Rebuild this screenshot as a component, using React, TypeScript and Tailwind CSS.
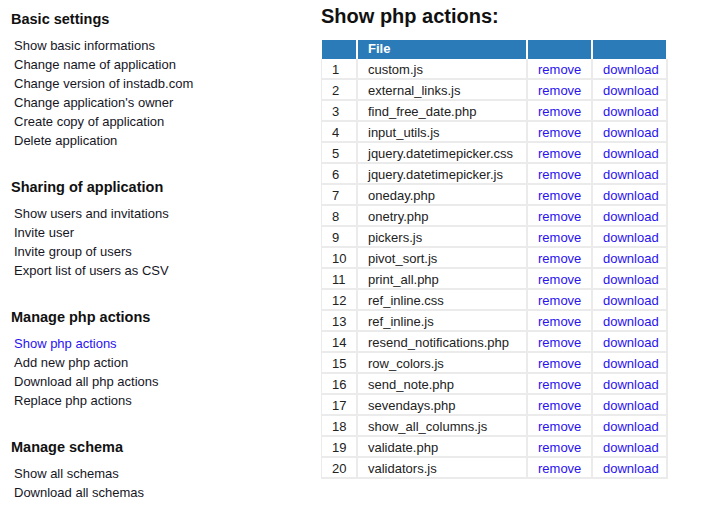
const sections = [
  {
    title: "Basic settings",
    items: [
      "Show basic informations",
      "Change name of application",
      "Change version of instadb.com",
      "Change application's owner",
      "Create copy of application",
      "Delete application",
    ],
  },
  {
    title: "Sharing of application",
    items: [
      "Show users and invitations",
      "Invite user",
      "Invite group of users",
      "Export list of users as CSV",
    ],
  },
  {
    title: "Manage php actions",
    items: [
      "Show php actions",
      "Add new php action",
      "Download all php actions",
      "Replace php actions",
    ],
  },
  {
    title: "Manage schema",
    items: ["Show all schemas", "Download all schemas"],
  },
];

const files = [
  "custom.js",
  "external_links.js",
  "find_free_date.php",
  "input_utils.js",
  "jquery.datetimepicker.css",
  "jquery.datetimepicker.js",
  "oneday.php",
  "onetry.php",
  "pickers.js",
  "pivot_sort.js",
  "print_all.php",
  "ref_inline.css",
  "ref_inline.js",
  "resend_notifications.php",
  "row_colors.js",
  "send_note.php",
  "sevendays.php",
  "show_all_columns.js",
  "validate.php",
  "validators.js",
];

const active = "Show php actions";

export default function App() {
  return (
    <div className="flex min-h-screen bg-white font-['Liberation_Sans',Arial,sans-serif] text-[#222]">
      {/* sidebar */}
      <aside className="w-[321px] shrink-0 pl-[11px] pt-[9px]">
        {sections.map((section) => (
          <div key={section.title} className="mb-[27px]">
            <h2 className="text-[14.5px] font-bold leading-[20px] text-[#111]">
              {section.title}
            </h2>
            <ul className="mt-[7px] pl-[3px]">
              {section.items.map((item) => (
                <li key={item} className="text-[13px] leading-[19px]">
                  <a
                    href="#"
                    className={item === active ? "text-[#2a12f0]" : "text-[#16161f]"}
                  >
                    {item}
                  </a>
                </li>
              ))}
            </ul>
          </div>
        ))}
      </aside>

      {/* main */}
      <main className="pt-[4px]">
        <h1 className="text-[20px] font-bold leading-[24px] text-[#111]">
          Show php actions:
        </h1>
        <table className="mt-[12px] w-[347px] table-fixed border-separate border-spacing-0 text-[13px] leading-[15px]">
          <colgroup>
            <col className="w-[37px]" />
            <col className="w-[170px]" />
            <col className="w-[65px]" />
            <col className="w-[75px]" />
          </colgroup>
          <thead>
            <tr className="bg-[#2b7bb9] text-left font-bold text-white">
              <th className="border-l border-r-2 border-white pb-[3px] pl-[10px] pt-[1px]" />
              <th className="border-r-2 border-white pb-[3px] pl-[10px] pt-[1px]">File</th>
              <th className="border-r-2 border-white pb-[3px] pl-[10px] pt-[1px]" />
              <th className="border-r-2 border-white pb-[3px] pl-[10px] pt-[1px]" />
            </tr>
          </thead>
          <tbody>
            {files.map((file, i) => (
              <tr key={file}>
                <td className="border-b-2 border-l border-r-2 border-[#ebebeb] pb-[1px] pl-[10px] pt-[3px]">
                  {i + 1}
                </td>
                <td className="border-b-2 border-r-2 border-[#ebebeb] pb-[1px] pl-[10px] pt-[3px]">
                  {file}
                </td>
                <td className="border-b-2 border-r-2 border-[#ebebeb] pb-[1px] pl-[10px] pt-[3px]">
                  <a href="#" className="text-[#2a12f0]">
                    remove
                  </a>
                </td>
                <td className="border-b-2 border-r-2 border-[#ebebeb] pb-[1px] pl-[10px] pt-[3px]">
                  <a href="#" className="text-[#2a12f0]">
                    download
                  </a>
                </td>
              </tr>
            ))}
          </tbody>
        </table>
      </main>
    </div>
  );
}
